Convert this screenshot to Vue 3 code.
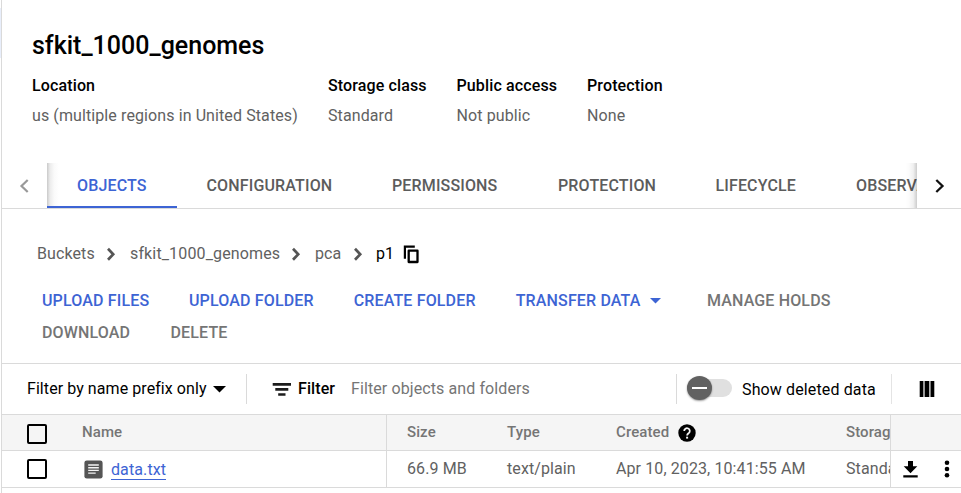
<script setup>
const details = [
  { label: 'Location', value: 'us (multiple regions in United States)', cls: 'location' },
  { label: 'Storage class', value: 'Standard', cls: 'storage' },
  { label: 'Public access', value: 'Not public', cls: 'access' },
  { label: 'Protection', value: 'None', cls: 'protect' },
]
const tabs = [
  { name: 'OBJECTS', cls: 'objects' },
  { name: 'CONFIGURATION', cls: 'configuration' },
  { name: 'PERMISSIONS', cls: 'permissions' },
  { name: 'PROTECTION', cls: 'protection' },
  { name: 'LIFECYCLE', cls: 'lifecycle' },
  { name: 'OBSERVABILITY', cls: 'observability' },
]
const crumbs = [
  { name: 'Buckets', cls: 'root' },
  { name: 'sfkit_1000_genomes', cls: 'bucket' },
  { name: 'pca', cls: 'folder' },
]
</script>

<template>
  <div class="page">
    <div class="rail"><span class="rail-mark"></span></div>
    <main class="main">
      <h1 class="title">sfkit_1000_genomes</h1>
      <dl class="details">
        <div v-for="d in details" :key="d.label" class="detail" :class="d.cls">
          <dt>{{ d.label }}</dt>
          <dd>{{ d.value }}</dd>
        </div>
      </dl>

      <nav class="tabbar">
        <button class="pager prev" aria-label="Previous">
          <svg width="10" height="14" viewBox="0 0 10 14"><path d="M8.700 1 2.500 7l6.200 6" fill="none" stroke="#999" stroke-width="2.200" /></svg>
        </button>
        <div class="tabs">
          <a v-for="(t, i) in tabs" :key="t.name" class="tab" :class="[t.cls, { active: i === 0 }]"><span>{{ t.name }}</span></a>
        </div>
        <button class="pager next" aria-label="Next">
          <svg width="10" height="14" viewBox="0 0 10 14"><path d="M1.300 1l6.200 6-6.200 6" fill="none" stroke="#111" stroke-width="2.300" /></svg>
        </button>
      </nav>

      <div class="crumbs">
        <template v-for="c in crumbs" :key="c.name">
          <span class="crumb" :class="c.cls">{{ c.name }}</span>
          <svg class="chevron" width="10" height="14" viewBox="0 0 10 14"><path d="M2 1.800 7.200 7.300 2 12.800" fill="none" stroke="#555" stroke-width="2.700" /></svg>
        </template>
        <span class="current">p1</span>
        <svg class="copy" width="16" height="19" viewBox="0 0 16 19"><path d="M1.900 13.700V1.700h9.900" fill="none" stroke="#000" stroke-width="2.200" /><path d="M5.700 5.700h8.800V17H5.700z" fill="none" stroke="#000" stroke-width="2.300" stroke-linejoin="round" /></svg>
      </div>

      <div class="actions">
        <div class="action-row">
          <span class="action files">UPLOAD FILES</span>
          <span class="action upfolder">UPLOAD FOLDER</span>
          <span class="action create">CREATE FOLDER</span>
          <span class="action transfer">TRANSFER DATA</span>
          <svg class="menu-arrow" width="11" height="6" viewBox="0 0 11 6"><path d="M0 0h11L5.500 5.500z" fill="#3d64d4" /></svg>
          <span class="action muted holds">MANAGE HOLDS</span>
        </div>
        <div class="action-row">
          <span class="action muted download">DOWNLOAD</span>
          <span class="action muted delete">DELETE</span>
        </div>
      </div>

      <div class="filterbar">
        <div class="prefix">
          <span class="prefix-label">Filter by name prefix only</span>
          <svg width="13" height="7" viewBox="0 0 13 7"><path d="M0 0h13L6.500 6.500z" fill="#000" /></svg>
        </div>
        <div class="filter">
          <svg width="19" height="13" viewBox="0 0 19 13"><path d="M.7 0H19v2.700H.7zM3.300 5h13v2.700h-13zM6.200 10.200h7.300v2.500H6.200z" fill="#1c1c1c" /></svg>
          <b>Filter</b>
          <span class="placeholder">Filter objects and folders</span>
        </div>
        <div class="deleted">
          <span class="switch"><span class="knob"></span></span>
          <span class="switch-label">Show deleted data</span>
        </div>
        <div class="columns">
          <svg width="16" height="16" viewBox="0 0 16 16"><path d="M.7 0h3.700v16H.7zM5.600 0h4.700v16H5.600zM11.500 0h3.800v16h-3.800z" fill="#000" /></svg>
        </div>
      </div>

      <div class="table">
        <div class="row head">
          <div class="check"><span class="box"></span></div>
          <div class="name"><span>Name</span></div>
          <div class="size"><span>Size</span></div>
          <div class="type"><span>Type</span></div>
          <div class="created">
            <span>Created</span>
            <svg class="help" width="18" height="18" viewBox="0 0 18 18"><circle cx="9" cy="9" r="8.700" fill="#000" /><path d="M6.200 7a2.800 2.700 0 1 1 4.600 2C9.600 9.900 9.100 10.300 9.100 11.500" fill="none" stroke="#f5f5f5" stroke-width="1.800" /><path d="M8.100 12.700h2v1.900h-2z" fill="#f5f5f5" /></svg>
          </div>
          <div class="class"><span>Storage class</span></div>
          <div class="tools"></div>
        </div>
        <div class="row body">
          <div class="check"><span class="box"></span></div>
          <div class="name">
            <svg class="doc" width="19" height="19" viewBox="0 0 19 19"><rect x=".4" y=".4" width="18.200" height="18.200" rx="2.400" fill="#555" /><path d="M4.200 5h10.600M4.200 7.700h10.600M4.200 10.400h10.600M4.200 13.100h7.500" stroke="#f4f4f4" stroke-width="1.400" /></svg>
            <a class="link">data.txt</a>
          </div>
          <div class="size">66.9 MB</div>
          <div class="type">text/plain</div>
          <div class="created">Apr 10, 2023, 10:41:55 AM</div>
          <div class="class">Standard</div>
          <div class="tools">
            <svg class="dl" width="15" height="17" viewBox="0 0 15 17"><path d="M5 0h5v5.300h4.300L7.500 12.200.7 5.300H5zM.3 14.300h14.400v2.300H.3z" fill="#000" /></svg>
            <svg class="more" width="6" height="18" viewBox="0 0 6 18"><g fill="#000"><circle cx="3" cy="2.700" r="2.300" /><circle cx="3" cy="9" r="2.300" /><circle cx="3" cy="15.300" r="2.300" /></g></svg>
          </div>
        </div>
      </div>
    </main>
  </div>
</template>

<style>
body { margin: 0; background: #fff; overflow: hidden; }
</style>
<style scoped>
* { box-sizing: border-box; }
.page { display: flex; width: 961px; height: 493px; overflow: hidden; font: 16px/20px Roboto, "Liberation Sans", sans-serif; letter-spacing: .1px; color: #000; white-space: nowrap; }
.rail { width: 1px; flex: none; padding-top: 8px; }
.rail-mark { display: block; width: 1px; height: 50px; background: #e8eefb; }
.main { width: 960px; flex: none; border-left: 1px solid #dadada; }
.title { margin: 30px 0 0 30px; font-size: 25px; line-height: 32px; font-weight: 500; letter-spacing: 0; }
.details { display: flex; margin: 14px 0 0 30px; height: 87px; }
.detail { flex: none; }
.detail.location { width: 296px; }
.detail.storage { width: 128.500px; }
.detail.access { width: 130.500px; }
dt { font-weight: 500; letter-spacing: .13px; }
dd { margin: 10px 0 0; color: #616161; }
.tabbar { display: flex; height: 46px; border-bottom: 1px solid #dadada; }
.pager { flex: none; display: flex; align-items: center; border: 0; padding: 0; background: #fff; }
.prev { width: 45px; padding-left: 17px; }
.next { width: 44px; padding-left: 18px; }
.tabs { width: 870px; display: flex; overflow: hidden; position: relative; }
.tabs::before, .tabs::after { content: ""; position: absolute; top: 0; bottom: 0; width: 12px; }
.tabs::before { left: 0; background: linear-gradient(90deg, #c9c9c9, #ececec 25%, #fafafa 60%, transparent); }
.tabs::after { right: 0; background: linear-gradient(270deg, #0003, #00000010 30%, #00000004 65%, transparent); }
.tab { flex: none; padding: 13px 0 0 30px; font-weight: 500; letter-spacing: .15px; color: #5c5c5c; position: relative; }
.tab.active { color: #3d64d4; border-bottom: 2px solid #3d64d4; }
.tab.objects { width: 129.500px; }
.tab.configuration { width: 185.500px; }
.tab.permissions { width: 166px; }
.tab.protection { width: 157.500px; }
.tab.lifecycle { width: 140.500px; }
.crumbs { display: flex; align-items: center; height: 20px; margin: 35px 0 0 35px; color: #616161; }
.crumb { flex: none; }
.root { width: 69px; }
.bucket { width: 161px; letter-spacing: .14px; }
.folder { width: 38px; }
.chevron { flex: none; margin-right: 14px; }
.folder + .chevron { margin-right: 13px; }
.current { width: 27px; color: #000; }
.copy { margin-top: 1px; }
.actions { height: 99px; padding: 27px 0 0 40px; }
.action-row { display: flex; align-items: center; height: 20px; margin-bottom: 12px; }
.action { font-weight: 500; letter-spacing: .15px; color: #3d64d4; flex: none; }
.action.muted { color: #757575; }
.files { width: 147px; }
.upfolder { width: 164.700px; }
.create { width: 162px; }
.transfer { width: 134.300px; }
.menu-arrow { margin-right: 46px; }
.download { width: 128.500px; }
.filterbar { display: flex; align-items: center; height: 51px; border-top: 1px solid #dadada; }
.filterbar > div { display: flex; align-items: center; height: 30px; }
.filterbar .prefix { width: 245px; padding-left: 25px; border-right: 1px solid #dadada; justify-content: space-between; padding-right: 20px; }
.prefix-label { letter-spacing: .07px; }
.filterbar .filter { width: 430px; padding-left: 25px; border-right: 1px solid #dadada; }
.filter b { font-weight: 500; width: 53px; margin-left: 7px; }
.placeholder { color: #757575; }
.filterbar .deleted { width: 215px; border-right: 1px solid #e4e4e4; padding-left: 10px; }
.switch { display: flex; align-items: center; width: 45px; height: 18px; border-radius: 9px; background: #e0e0e0; margin-top: -2px; }
.knob { width: 25px; height: 24px; flex: none; border-radius: 50%; background: #616161; box-shadow: 0 1px 2px #0006; display: flex; align-items: center; justify-content: center; }
.knob::after { content: ""; width: 15px; height: 2px; background: #fff; }
.switch-label { margin-left: 10px; padding-top: 2px; letter-spacing: .13px; }
.filterbar .columns { padding-left: 27px; }
.row { display: flex; border-bottom: 1px solid #dadada; color: #616161; }
.row > div { flex: none; display: flex; align-items: center; height: 100%; }
.head { height: 37px; border-top: 1px solid #dadada; background: #f5f5f5; font-size: 15px; line-height: 18px; font-weight: 500; color: #757575; }
.head > div > span:not(.box) { margin-bottom: 2px; }
.body { height: 37px; }
.row .check { width: 80px; padding-left: 25px; }
.box { width: 20px; height: 20px; border: 2px solid #000; border-radius: 2px; background: #fff; }
.head .box { margin-top: 3px; background: transparent; }
.row .name { width: 305px; border-right: 1px solid #dadada; }
.row .size { width: 100px; padding-left: 20px; }
.row .type { width: 109px; padding-left: 20px; }
.row .created { width: 230px; padding-left: 20px; }
.row .class { width: 64px; padding-left: 20px; overflow: hidden; }
.row .tools { width: 71px; border-left: 1px solid #dadada; padding-left: 12px; }
.help { margin-left: 9px; }
.doc { margin-left: 2px; margin-right: 8px; }
.link { color: #3d64d4; border-bottom: 1px solid #3d64d4; line-height: 19px; margin-top: 2px; }
.more { margin-left: 26px; }
</style>
